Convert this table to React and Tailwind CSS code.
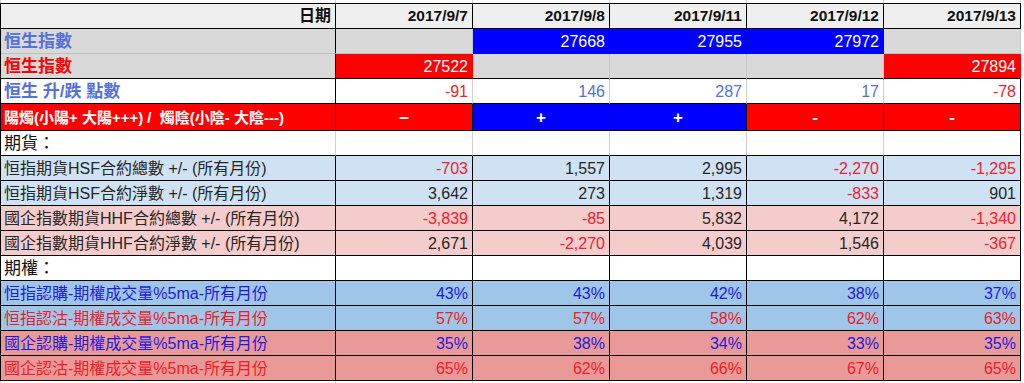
import React from "react";

const FONT = "font-['Liberation_Sans','Noto_Sans_CJK_TC',sans-serif]";
const GRID = "grid grid-cols-[335px_repeat(5,137px)]";

const BLUE_LBL = "text-[#5470dc]";
const RED = "text-[#f0202c]";
const DARK = "text-[#262626]";
const OPT_BLUE = "text-[#1c1cdc]";
const OPT_RED = "text-[#f01c24]";

function Cell({ className = "", children }) {
  return <div className={`flex items-center overflow-hidden whitespace-nowrap ${className}`}>{children}</div>;
}

function Label({ className = "", children }) {
  return <Cell className={`pl-[3px] pt-[1px] ${className}`}>{children}</Cell>;
}

function Num({ className = "", children }) {
  return <Cell className={`justify-end pr-[4px] pt-[1px] text-[16px] ${className}`}>{children}</Cell>;
}

function NumRow({ label, labelColor, bg, cells }) {
  return (
    <div className={`${GRID} h-[25px] ${bg}`}>
      <Label className={`border-r border-b border-black text-[16px] ${labelColor}`}>{label}</Label>
      {cells.map((c, i) => (
        <Num key={i} className={`border-r border-b border-black ${c[1]}`}>{c[0]}</Num>
      ))}
    </div>
  );
}

export default function App() {
  const dates = ["2017/9/7", "2017/9/8", "2017/9/11", "2017/9/12", "2017/9/13"];
  return (
    <div className={`w-[1024px] h-[383px] bg-white ${FONT} leading-none`}>
      {/* top gridline strip */}
      <div className={`${GRID} h-[3px] border-l border-l-[#d4d4d4]`}>
        {[0, 1, 2, 3, 4, 5].map((i) => (
          <div key={i} className="border-r border-r-[#d4d4d4]" />
        ))}
      </div>

      <div className="w-[1021px] border-l border-t border-black">
        {/* header */}
        <div className={`${GRID} h-[25px] bg-[#efefef]`}>
          <Cell className="justify-end pr-[4px] border-r border-b border-black font-bold text-[16px] text-[#111]">日期</Cell>
          {dates.map((d) => (
            <Cell key={d} className="justify-end pr-[4px] border-r border-b border-black font-bold text-[15.5px] text-[#111]">{d}</Cell>
          ))}
        </div>

        {/* 恒生指數 blue */}
        <div className={`${GRID} h-[25px] bg-[#d9d9d9]`}>
          <Label className={`border-r border-r-black border-b border-b-[#c0c0c0] font-bold text-[17px] ${BLUE_LBL}`}>恒生指數</Label>
          <Num className="border-r border-r-[#c8c8c8] border-b border-b-[#c0c0c0]" />
          <Num className="border-r border-r-[#0000ff] border-b border-b-[#0000ff] bg-[#0000ff] text-white">27668</Num>
          <Num className="border-r border-r-[#0000ff] border-b border-b-[#0000ff] bg-[#0000ff] text-white">27955</Num>
          <Num className="border-r border-r-[#0000ff] border-b border-b-[#0000ff] bg-[#0000ff] text-white">27972</Num>
          <Num className="border-r border-r-[#c8c8c8] border-b border-b-[#c0c0c0]" />
        </div>

        {/* 恒生指數 red */}
        <div className={`${GRID} h-[25px] bg-[#d9d9d9]`}>
          <Label className="border-r border-b border-black font-bold text-[17px] text-[#ff0000]">恒生指數</Label>
          <Num className="border-r border-r-[#ff0000] border-b border-b-black bg-[#ff0000] text-white">27522</Num>
          <Num className="border-r border-r-[#c8c8c8] border-b border-b-black" />
          <Num className="border-r border-r-[#c8c8c8] border-b border-b-black" />
          <Num className="border-r border-r-[#c8c8c8] border-b border-b-black" />
          <Num className="border-r border-r-[#ff0000] border-b border-b-black bg-[#ff0000] text-white">27894</Num>
        </div>

        {/* 升跌 */}
        <div className={`${GRID} h-[25px] bg-white`}>
          <Label className={`border-r border-b border-black font-bold text-[17px] ${BLUE_LBL}`}>恒生 升/跌 點數</Label>
          <Num className={`border-r border-r-[#d0d0d0] border-b border-b-black ${RED}`}>-91</Num>
          <Num className={`border-r border-r-[#d0d0d0] border-b border-b-black ${BLUE_LBL}`}>146</Num>
          <Num className={`border-r border-r-[#d0d0d0] border-b border-b-black ${BLUE_LBL}`}>287</Num>
          <Num className={`border-r border-r-[#d0d0d0] border-b border-b-black ${BLUE_LBL}`}>17</Num>
          <Num className={`border-r border-r-black border-b border-b-black ${RED}`}>-78</Num>
        </div>

        {/* 陽燭 */}
        <div className={`${GRID} h-[27px] text-white font-bold`}>
          <Label className="border-r border-b border-black bg-[#ff0000] text-[15px]">陽燭(小陽+ 大陽+++) /&nbsp; 燭陰(小陰- 大陰---)</Label>
          <Cell className="justify-center border-r border-b border-black bg-[#ff0000] text-[18px]">–</Cell>
          <Cell className="justify-center border-r border-b border-black bg-[#0000ff] text-[17px]">+</Cell>
          <Cell className="justify-center border-r border-b border-black bg-[#0000ff] text-[17px]">+</Cell>
          <Cell className="justify-center border-r border-b border-black bg-[#ff0000] text-[17px]">-</Cell>
          <Cell className="justify-center border-r border-b border-black bg-[#ff0000] text-[17px]">-</Cell>
        </div>

        {/* 期貨 */}
        <div className={`${GRID} h-[25px] bg-white`}>
          <Label className="border-r border-r-[#d0d0d0] border-b border-b-black text-[17px] text-[#111]">期貨：</Label>
          <div className="border-r border-r-[#d0d0d0] border-b border-b-black" />
          <div className="border-r border-r-[#d0d0d0] border-b border-b-black" />
          <div className="border-r border-r-[#d0d0d0] border-b border-b-black" />
          <div className="border-r border-r-[#d0d0d0] border-b border-b-black" />
          <div className="border-r border-r-black border-b border-b-black" />
        </div>

        <NumRow
          label="恒指期貨HSF合約總數 +/- (所有月份)"
          labelColor={DARK}
          bg="bg-[#cfe2f3]"
          cells={[["-703", RED], ["1,557", DARK], ["2,995", DARK], ["-2,270", RED], ["-1,295", RED]]}
        />
        <NumRow
          label="恒指期貨HSF合約淨數 +/- (所有月份)"
          labelColor={DARK}
          bg="bg-[#cfe2f3]"
          cells={[["3,642", DARK], ["273", DARK], ["1,319", DARK], ["-833", RED], ["901", DARK]]}
        />
        <NumRow
          label="國企指數期貨HHF合約總數 +/- (所有月份)"
          labelColor={DARK}
          bg="bg-[#f4cccc]"
          cells={[["-3,839", RED], ["-85", RED], ["5,832", DARK], ["4,172", DARK], ["-1,340", RED]]}
        />
        <NumRow
          label="國企指數期貨HHF合約淨數 +/- (所有月份)"
          labelColor={DARK}
          bg="bg-[#f4cccc]"
          cells={[["2,671", DARK], ["-2,270", RED], ["4,039", DARK], ["1,546", DARK], ["-367", RED]]}
        />

        {/* 期權 */}
        <div className={`${GRID} h-[25px] bg-white`}>
          <Label className="border-r border-b border-black text-[17px] text-[#111]">期權：</Label>
          <div className="border-r border-b border-black" />
          <div className="border-r border-b border-black" />
          <div className="border-r border-b border-black" />
          <div className="border-r border-b border-black" />
          <div className="border-r border-b border-black" />
        </div>

        <NumRow
          label="恒指認購-期權成交量%5ma-所有月份"
          labelColor={OPT_BLUE}
          bg="bg-[#9fc5e8]"
          cells={[["43%", OPT_BLUE], ["43%", OPT_BLUE], ["42%", OPT_BLUE], ["38%", OPT_BLUE], ["37%", OPT_BLUE]]}
        />
        <NumRow
          label="恒指認沽-期權成交量%5ma-所有月份"
          labelColor={OPT_RED}
          bg="bg-[#9fc5e8]"
          cells={[["57%", OPT_RED], ["57%", OPT_RED], ["58%", OPT_RED], ["62%", OPT_RED], ["63%", OPT_RED]]}
        />
        <NumRow
          label="國企認購-期權成交量%5ma-所有月份"
          labelColor={OPT_BLUE}
          bg="bg-[#ea9999]"
          cells={[["35%", OPT_BLUE], ["38%", OPT_BLUE], ["34%", OPT_BLUE], ["33%", OPT_BLUE], ["35%", OPT_BLUE]]}
        />
        <NumRow
          label="國企認沽-期權成交量%5ma-所有月份"
          labelColor={OPT_RED}
          bg="bg-[#ea9999]"
          cells={[["65%", OPT_RED], ["62%", OPT_RED], ["66%", OPT_RED], ["67%", OPT_RED], ["65%", OPT_RED]]}
        />
      </div>

      {/* bottom gridline strip */}
      <div className={`${GRID} h-[4px] border-l border-l-[#d4d4d4]`}>
        {[0, 1, 2, 3, 4, 5].map((i) => (
          <div key={i} className="border-r border-r-[#d4d4d4]" />
        ))}
      </div>
    </div>
  );
}
